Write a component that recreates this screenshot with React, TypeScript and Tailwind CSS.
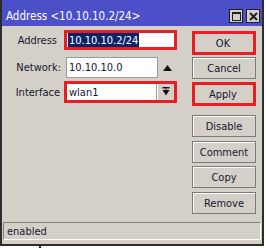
import { ReactNode } from 'react'

const RED = 'border-[3px] border-[#ea1c24]'

function WinButton({ label, marked }: { label: string; marked?: boolean }) {
  if (marked) {
    return (
      <div className={`h-[24px] ${RED} flex items-center justify-center`}>
        <span className="pr-[2px]">{label}</span>
      </div>
    )
  }
  return (
    <div className="h-[22px] border border-[#7a7a7a] shadow-[inset_1px_1px_0_#ffffff] flex items-center justify-center">
      <span>{label}</span>
    </div>
  )
}

function Row({ label, pr, children }: { label: string; pr: string; children: ReactNode }) {
  return (
    <div className="flex items-center">
      <div className={`w-[62px] text-right ${pr}`}>{label}</div>
      {children}
    </div>
  )
}

export default function App() {
  return (
    <div className="w-[266px] h-[248px] bg-white font-['DejaVu_Sans_Condensed','DejaVu_Sans',sans-serif] text-[11px] leading-none text-[#161630]">
      <div className="w-[264px] h-[246px] border-l-2 border-r-2 border-b-2 border-[#2c2c2c] bg-[#d4d0c8] flex flex-col">
        {/* title bar */}
        <div className="h-[26px] bg-[#4b4fc8] flex items-end pb-[3px] pl-[4px] pr-[2px]">
          <span className="text-white text-[11.5px] pb-[1px]">Address &lt;10.10.10.2/24&gt;</span>
          <div className="ml-auto flex gap-[3px]">
            <div className="w-[14px] h-[14px] bg-[#d4d0c8] border border-[#202020] flex items-center justify-center">
              <div className="w-[9px] h-[9px] border border-[#202020] border-t-2" />
            </div>
            <div className="w-[14px] h-[14px] bg-[#d4d0c8] border border-[#202020] flex items-center justify-center">
              <svg width="9" height="9" viewBox="0 0 9 9">
                <path d="M1 1 L8 8 M8 1 L1 8" stroke="#202020" strokeWidth="2" />
              </svg>
            </div>
          </div>
        </div>

        <div className="flex flex-1">
          {/* form */}
          <div className="flex-1 flex flex-col pt-[4px]">
            <Row label="Address" pr="pr-[7px]">
              <div className={`w-[113px] h-[20px] ${RED} bg-white flex items-center pl-[1px]`}>
                <span className="bg-[#0a246a] text-white h-[14px] px-[1px] flex items-center">10.10.10.2/24</span>
              </div>
            </Row>
            <div className="mt-[7px]">
              <Row label="Network:" pr="pr-[3px]">
                <div className="ml-[2px] w-[92px] h-[21px] bg-white border border-[#9c9c9c] flex items-center pl-[2px]">
                  10.10.10.0
                </div>
                <svg className="ml-[5px]" width="9" height="6" viewBox="0 0 9 6">
                  <path d="M0 6 L4.5 0 L9 6 Z" fill="#111" />
                </svg>
              </Row>
            </div>
            <div className="mt-[3px]">
              <Row label="Interface" pr="pr-[4px]">
                <div className={`w-[113px] h-[22px] ${RED} bg-white flex`}>
                  <div className="w-[90px] flex items-center pl-[2px] border-r border-[#9c9c9c]">wlan1</div>
                  <div className="flex-1 bg-[#d4d0c8] border-l border-white flex items-center justify-center">
                    <svg width="8" height="10" viewBox="0 0 8 10">
                      <rect x="0.5" y="0" width="7" height="1.5" fill="#111" />
                      <path d="M0.5 3 L7.5 3 L4 8.5 Z" fill="#111" />
                      <rect x="3" y="2.5" width="2" height="2" fill="#111" />
                    </svg>
                  </div>
                </div>
              </Row>
            </div>
          </div>

          {/* buttons */}
          <div className="w-[64px] mr-[6px] flex flex-col pt-[5px]">
            <WinButton label="OK" marked />
            <div className="mt-[2px]"><WinButton label="Cancel" /></div>
            <div className="mt-[3px]"><WinButton label="Apply" marked /></div>
            <div className="mt-[9px]"><WinButton label="Disable" /></div>
            <div className="mt-[4px]"><WinButton label="Comment" /></div>
            <div className="mt-[3px]"><WinButton label="Copy" /></div>
            <div className="mt-[4px]"><WinButton label="Remove" /></div>
          </div>
        </div>

        {/* status bar */}
        <div className="mx-[1px] mb-[4px] h-[18px] border border-t-[#808080] border-l-[#808080] border-b-white border-r-white flex items-center pl-[3px]">
          enabled
        </div>
      </div>
      <div className="ml-[39px] w-[2px] h-[2px] bg-[#2c2c2c]" />
    </div>
  )
}
